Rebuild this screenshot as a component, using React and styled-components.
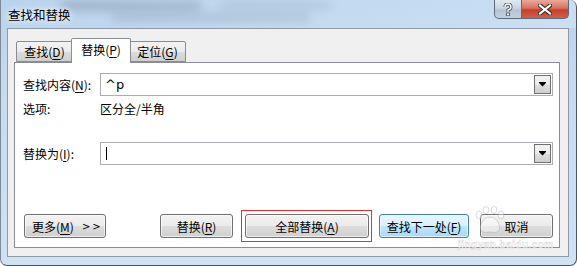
import React from "react";
import styled, { createGlobalStyle } from "styled-components";

const Global = createGlobalStyle`
  html, body { margin: 0; padding: 0; background: #fff; }
  body { font-family: "Noto Sans CJK SC", "Liberation Sans", sans-serif; font-size: 12px; color: #000; }
`;

const Window = styled.div`
  position: relative;
  width: 577px;
  height: 266px;
  box-sizing: border-box;
  border: 1px solid #4a5563;
  border-top: none;
  border-left-color: #7d8a99;
  border-radius: 0 7px 7px 7px;
  background: linear-gradient(180deg, #b9d3ec 0%, #c7dcf0 40%, #cfe2f4 100%);
  display: flex;
  flex-direction: column;
  overflow: hidden;
`;

const Blur = styled.div`
  position: absolute;
  background: #4c5a6a;
  filter: blur(5px);
  opacity: ${(p) => p.$o};
  border-radius: 4px;
`;

const TitleBar = styled.div`
  height: 28px;
  display: flex;
  justify-content: space-between;
  align-items: flex-start;
  padding-left: 7px;
  position: relative;
  background: linear-gradient(90deg, rgba(255,255,255,0) 0%, rgba(230,242,252,0.35) 100%);
`;

const Title = styled.div`
  font-size: 12.5px;
  line-height: 30px;
  color: #000;
  position: relative;
  z-index: 1;
  text-shadow: 0 0 8px rgba(255,255,255,0.9), 0 0 4px rgba(255,255,255,0.9);
`;

const Caption = styled.div`
  display: flex;
  margin-right: 7px;
  position: relative;
  z-index: 1;
`;

const CapBtn = styled.div`
  height: 19px;
  width: ${(p) => p.$w}px;
  box-sizing: border-box;
  border: 1px solid #5c6978;
  border-top: none;
  display: flex;
  align-items: center;
  justify-content: center;
  background: ${(p) =>
    p.$close
      ? "linear-gradient(180deg, #e9a99b 0%, #d6725f 45%, #c4402a 55%, #d0614a 100%)"
      : "linear-gradient(180deg, #e1e9f2 0%, #cbd6e3 45%, #b5c4d5 55%, #c2d1e0 100%)"};
  border-radius: ${(p) => (p.$close ? "0 0 5px 0" : "0 0 0 5px")};
  ${(p) => (p.$close ? "border-left: none;" : "")}
`;

const Client = styled.div`
  flex: 1;
  margin: 0 7px 8px 6px;
  background: #f0f0f0;
  border: 1px solid #8f9aa6;
  display: flex;
  flex-direction: column;
  padding: 9px 8px 8px 6px;
`;

const TabStrip = styled.div`
  display: flex;
  align-items: flex-end;
  padding-left: 2px;
  height: 24px;
  position: relative;
  z-index: 2;
`;

const Tab = styled.div`
  box-sizing: border-box;
  height: ${(p) => (p.$active ? 25 : 21)}px;
  width: ${(p) => (p.$active ? 60 : 57)}px;
  margin: 0 ${(p) => (p.$active ? -2 : 0)}px ${(p) => (p.$active ? -1 : 0)}px;
  position: relative;
  z-index: ${(p) => (p.$active ? 2 : 1)};
  border: 1px solid #898c95;
  border-bottom: ${(p) => (p.$active ? "none" : "1px solid #898c95")};
  border-radius: 2px 2px 0 0;
  background: ${(p) =>
    p.$active ? "#fff" : "linear-gradient(180deg, #f3f3f3 0%, #ebebeb 50%, #dddddd 52%, #cfcfcf 100%)"};
  display: flex;
  align-items: center;
  justify-content: center;
  padding-bottom: ${(p) => (p.$active ? 3 : 0)}px;
  font-size: 12px;
`;

const Panel = styled.div`
  flex: 1;
  background: #fff;
  border: 1px solid #898c95;
  display: flex;
  flex-direction: column;
  padding: 10px 6px 9px 8px;
`;

const FieldRow = styled.div`
  display: flex;
  align-items: center;
  height: 23px;
  margin-top: ${(p) => p.$mt || 0}px;
`;

const Label = styled.div`
  width: 77px;
  flex: none;
  font-size: 12px;
`;

const Combo = styled.div`
  flex: 1;
  height: 23px;
  box-sizing: border-box;
  border: 1px solid #abadb3;
  display: flex;
  align-items: center;
  padding: 1px;
`;

const ComboText = styled.div`
  flex: 1;
  padding-left: 3px;
  font-family: "DejaVu Sans", "Liberation Sans", sans-serif;
  font-size: 13px;
  display: flex;
  align-items: center;
`;

const Caret = styled.div`
  width: 1px;
  height: 13px;
  background: #000;
  margin-left: 1px;
`;

const DropBtn = styled.div`
  width: 17px;
  height: 19px;
  box-sizing: border-box;
  border: 1px solid #707070;
  background: linear-gradient(180deg, #f2f2f2 0%, #ebebeb 50%, #dddddd 52%, #cfcfcf 100%);
  display: flex;
  align-items: center;
  justify-content: center;
`;

const OptionRow = styled.div`
  display: flex;
  align-items: center;
  height: 20px;
  margin-top: 2px;
`;

const Spacer = styled.div`
  flex: 1;
`;

const ButtonRow = styled.div`
  display: flex;
  align-items: center;
  height: 24px;
  margin-left: 1px;
`;

const Button = styled.div`
  box-sizing: border-box;
  width: ${(p) => p.$w}px;
  height: 24px;
  margin-left: ${(p) => p.$ml || 0}px;
  border: 1px solid ${(p) => (p.$default ? "#3c7fb1" : "#707070")};
  border-radius: 3px;
  background: ${(p) =>
    p.$default
      ? "linear-gradient(180deg, #eaf6fd 0%, #d9f0fc 50%, #bee6fd 52%, #a7d9f5 100%)"
      : "linear-gradient(180deg, #f2f2f2 0%, #ebebeb 50%, #dddddd 52%, #cfcfcf 100%)"};
  box-shadow: inset 0 0 0 1px rgba(255,255,255,0.65);
  display: flex;
  align-items: center;
  justify-content: ${(p) => (p.$left ? "flex-start" : "center")};
  padding-left: ${(p) => (p.$left ? 7 : 0)}px;
  font-size: 12px;
  position: relative;
`;

const Highlight = styled.div`
  position: absolute;
  inset: -5px -4px -5px -5px;
  border: 1px solid #e8302a;
  pointer-events: none;
`;

const Arrows = styled.span`
  font-family: "DejaVu Sans", sans-serif;
  font-size: 10px;
  margin-left: 8px;
  letter-spacing: 2px;
`;

const U = styled.span`
  text-decoration: underline;
  text-underline-offset: 2px;
`;

const PawMark = styled.svg`
  position: absolute;
  left: 470px;
  top: 206px;
  pointer-events: none;
  opacity: 0.55;
`;

const WmSmall = styled.div`
  position: absolute;
  left: 457px;
  top: 239px;
  pointer-events: none;
  font-family: "Liberation Sans", sans-serif;
  font-size: 10.5px;
  line-height: 11px;
  font-weight: bold;
  color: rgba(255, 255, 255, 0.8);
  -webkit-text-stroke: 0.5px rgba(175, 175, 175, 0.55);
  letter-spacing: 0.2px;
`;

const ArrowIcon = () => (
  <svg width="7" height="5" viewBox="0 0 7 5">
    <rect x="0" y="0" width="7" height="1" fill="#000" />
    <polygon points="0,1 7,1 3.5,4.5" fill="#000" />
  </svg>
);

export default function App() {
  return (
    <>
      <Global />
      <Window>
        <Blur $o={0.35} style={{ left: 60, top: 2, width: 140, height: 8 }} />
        <Blur $o={0.25} style={{ left: 110, top: 14, width: 200, height: 7 }} />
        <Blur $o={0.2} style={{ left: 220, top: 2, width: 110, height: 7 }} />
        <TitleBar>
          <Title>查找和替换</Title>
          <Caption>
            <CapBtn $w={28}>
              <svg width="10" height="13" viewBox="0 0 10 13">
                <path d="M2 4 Q2 1 5 1 Q8 1 8 4 Q8 6 5 7 L5 9" stroke="#40474f" strokeWidth="3" fill="none" />
                <path d="M2 4 Q2 1 5 1 Q8 1 8 4 Q8 6 5 7 L5 9" stroke="#fff" strokeWidth="1.4" fill="none" />
                <rect x="3.6" y="10" width="2.8" height="2.8" fill="#fff" stroke="#40474f" strokeWidth="0.8" />
              </svg>
            </CapBtn>
            <CapBtn $w={47} $close>
              <svg width="14" height="11" viewBox="0 0 14 11">
                <path d="M2 1.5 L12 9.5 M12 1.5 L2 9.5" stroke="#3d2a27" strokeWidth="4.2" strokeLinecap="square" />
                <path d="M2 1.5 L12 9.5 M12 1.5 L2 9.5" stroke="#fff" strokeWidth="2.2" strokeLinecap="square" />
              </svg>
            </CapBtn>
          </Caption>
        </TitleBar>
        <Client>
          <TabStrip>
            <Tab>查找(<U>D</U>)</Tab>
            <Tab $active>替换(<U>P</U>)</Tab>
            <Tab>定位(<U>G</U>)</Tab>
          </TabStrip>
          <Panel>
            <FieldRow>
              <Label>查找内容(<U>N</U>):</Label>
              <Combo>
                <ComboText>^p</ComboText>
                <DropBtn><ArrowIcon /></DropBtn>
              </Combo>
            </FieldRow>
            <OptionRow>
              <Label>选项:</Label>
              <div>区分全/半角</div>
            </OptionRow>
            <FieldRow $mt={24}>
              <Label>替换为(<U>I</U>):</Label>
              <Combo>
                <ComboText><Caret /></ComboText>
                <DropBtn><ArrowIcon /></DropBtn>
              </Combo>
            </FieldRow>
            <Spacer />
            <ButtonRow>
              <Button $w={82} $left>更多(<U>M</U>)<Arrows>&gt;&gt;</Arrows></Button>
              <Button $w={73} $ml={54}>替换(<U>R</U>)</Button>
              <Button $w={124} $ml={12}>
                全部替换(<U>A</U>)
                <Highlight />
              </Button>
              <Button $w={90} $ml={10} $default>查找下一处(<U>F</U>)</Button>
              <Button $w={73} $ml={11}>取消</Button>
            </ButtonRow>
          </Panel>
        </Client>
        <PawMark width="40" height="30" viewBox="0 0 40 30">
          <g fill="rgba(255,255,255,0.7)" stroke="rgba(160,160,160,0.7)" strokeWidth="1">
            <ellipse cx="8" cy="9" rx="3" ry="4" />
            <ellipse cx="15" cy="4" rx="3" ry="3.5" />
            <ellipse cx="23" cy="4" rx="3" ry="3.5" />
            <ellipse cx="30" cy="9" rx="3" ry="4" />
            <path d="M19 11 C12 11 8 20 10 24 C12 28 17 26 19 26 C21 26 26 28 28 24 C30 20 26 11 19 11 Z" />
          </g>
        </PawMark>
        <WmSmall>jingyan.baidu.com</WmSmall>
      </Window>
    </>
  );
}
